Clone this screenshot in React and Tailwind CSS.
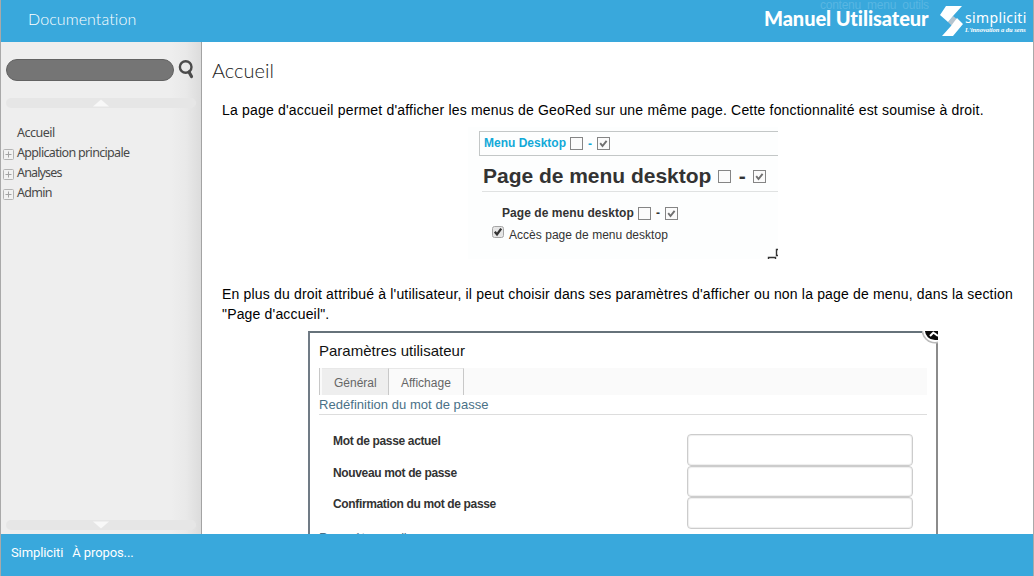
import React from "react";

const SANS = "font-['Liberation_Sans',Arial,sans-serif]";

function Box({ checked }) {
  return (
    <svg width="13" height="13" viewBox="0 0 13 13" className="block shrink-0">
      <rect x="0.5" y="0.5" width="12" height="12" fill="#fbfbfb" stroke="#858585" />
      {checked && <path d="M3.2 6.2 L5.5 9 L9.6 3.8" fill="none" stroke="#707070" strokeWidth="1.9" />}
    </svg>
  );
}

function Pair({ gap, dash }) {
  return (
    <>
      <Box />
      <span className={gap}>{dash}</span>
      <Box checked />
    </>
  );
}

function ScrollBar({ up }) {
  return (
    <div className="flex h-[10px] w-[190px] justify-center rounded-full bg-[#e6e6e6]">
      <svg width="16" height="10" viewBox="0 0 16 10">
        <path d={up ? "M0 8.5 L8 1.5 L16 8.5 Z" : "M0 1.5 L8 8.5 L16 1.5 Z"} fill="#f8f8f8" />
      </svg>
    </div>
  );
}

function MenuItem({ label, plus, track }) {
  return (
    <li className="flex h-5 items-center">
      <span className="w-[14px] shrink-0 pl-[2px] pt-[4px]">
        {plus && (
          <svg width="11" height="11" viewBox="0 0 11 11" className="block">
            <rect x="0.5" y="0.5" width="10" height="10" rx="1" fill="#f2f2f2" stroke="#b3b3b3" />
            <path d="M2.5 5.5H8.5M5.5 2.5V8.5" stroke="#a3a3a3" />
          </svg>
        )}
      </span>
      <span className={`pl-[2px] pt-[2px] text-[12.5px] leading-5 text-[#484848] ${track}`}>{label}</span>
    </li>
  );
}

function Header() {
  return (
    <header className="relative flex h-[42px] shrink-0 overflow-hidden bg-[#39a8dc] text-white">
      <h1 className="flex-1 pl-[27px] pt-[7px] font-['Lato',sans-serif] text-[16px] font-light leading-[24px] tracking-[0.09px]">Documentation</h1>
      <div className={`absolute left-[819px] top-[-3px] whitespace-nowrap text-[12px] leading-[17px] tracking-[-0.25px] text-[#58b6e2] ${SANS}`}>contenu&nbsp; menu&nbsp; outils</div>
      <div className="relative w-[165px] whitespace-nowrap pt-[6px] font-['Lato',sans-serif] text-[20px] font-black leading-[24px] tracking-[-0.08px]">Manuel Utilisateur</div>
      <div className="ml-[11px] flex w-[93px] pt-[6px]">
        <svg width="24" height="30" viewBox="0 0 24 30" className="shrink-0">
          <path d="M8 16L13 10L18 14L12 20Z" fill="#b4c4cf" />
          <path d="M6 0H22L13 10L8 16L0 9Z M17 12L23 18L13 30H2L11 20Z" fill="#fff" />
        </svg>
        <div className="pl-[1px] pt-[3px]">
          <div className="whitespace-nowrap font-['Noto_Sans',sans-serif] text-[14px] leading-[17px] tracking-[0.35px]">simpliciti</div>
          <div className="whitespace-nowrap font-['Liberation_Serif',serif] text-[6.5px] font-bold italic leading-[7px] tracking-[-0.02px]">L'innovation a du sens</div>
        </div>
      </div>
    </header>
  );
}

function Sidebar() {
  return (
    <aside className="flex w-[201px] shrink-0 flex-col border-r border-[#a3a3a3] bg-[linear-gradient(to_right,#eee_0,#eee_170px,#e9e9e9_185px,#dcdcdc_200px)] font-['Noto_Sans',sans-serif]">
      <div className="flex pl-[5px] pt-[17px]">
        <div className="h-[22px] w-[168px] rounded-[11px] border border-[#626262] bg-[#757575]" />
        <svg width="18" height="22" viewBox="0 0 18 22" className="ml-[4px]">
          <circle cx="7.7" cy="8" r="5.8" fill="none" stroke="#4b4b4b" strokeWidth="2.4" />
          <path d="M11 13L13.5 17.5" stroke="#4b4b4b" strokeWidth="3.2" strokeLinecap="round" />
        </svg>
      </div>
      <div className="pl-[5px] pt-[17px]"><ScrollBar up /></div>
      <ul className="flex-1 pt-[14px]">
        <MenuItem label="Accueil" track="tracking-[-0.5px]" />
        <MenuItem label="Application principale" plus track="tracking-[-0.67px]" />
        <MenuItem label="Analyses" plus track="tracking-[-0.85px]" />
        <MenuItem label="Admin" plus track="tracking-[-0.7px]" />
      </ul>
      <div className="pb-[4px] pl-[5px]"><ScrollBar /></div>
    </aside>
  );
}

function RightsPanel() {
  return (
    <div className="relative ml-[256px] h-[132px] w-[310px] shrink-0 overflow-hidden bg-[#fdfefe] pt-[4px] font-bold text-[#333]">
      <div className="ml-[11px] flex h-[25px] items-center border border-r-0 border-[#c3c7c7] pl-[4px] text-[12px] text-[#12a9d8]">
        <span className="mb-[2px] mr-[4px]">Menu Desktop</span>
        <Pair dash="-" gap="w-[14px] text-center" />
      </div>
      <div className="ml-[14px] flex h-[36px] items-center border-b border-[#e0e2e2] pt-[5px] text-[21px] leading-[30px]">
        <span className="ml-[1px] mr-[7px] tracking-[-0.02px]">Page de menu desktop</span>
        <Pair dash="-" gap="w-[22px] text-center" />
      </div>
      <div className="ml-[34px] mt-[12px] flex h-[18px] items-center text-[12px]">
        <span className="mr-[4px] tracking-[0.06px]">Page de menu desktop</span>
        <Pair dash="-" gap="w-[14px] text-center" />
      </div>
      <div className="ml-[24px] mt-[2px] flex h-[20px] items-center text-[12px] font-normal">
        <svg width="12" height="12" viewBox="0 0 12 12" className="mb-[4px] mr-[5px]">
          <rect x="0.5" y="0.5" width="11" height="11" rx="2" fill="#e6e6e6" stroke="#a5a5a5" />
          <path d="M2.8 5.8L5 8.4L9.2 2.6" fill="none" stroke="#333" strokeWidth="2.3" />
        </svg>
        <span className="pt-[2px] tracking-[0.03px]">Accès page de menu desktop</span>
      </div>
      <svg width="11" height="11" viewBox="0 0 11 11" className="absolute bottom-0 right-0">
        <path d="M1.5 11V9.5H8.5V11M11 1.5H9.5V7.5H11" fill="none" stroke="#333" strokeWidth="1.4" />
      </svg>
    </div>
  );
}

function Field({ label }) {
  return (
    <div className="flex h-[31.7px]">
      <span className="w-[354px] text-[12px] font-bold leading-[14px] tracking-[-0.35px] text-[#333]">{label}</span>
      <span className="block h-[31.7px] w-[226px] rounded-[4px] border border-[#ccc] bg-white shadow-[inset_0_0_1px_1px_#eee]" />
    </div>
  );
}

function SettingsPanel() {
  return (
    <div className="relative ml-[96px] mt-[7px] h-[260px] w-[630px] shrink-0 border-l-2 border-r-2 border-t-2 border-l-[#707b85] border-r-[#8b8b8b] border-t-[#66727a] bg-white pl-[9px] pr-[9px]">
      <div className="pt-[8px] text-[15px] leading-[20px] text-[#111]">Paramètres utilisateur</div>
      <div className="mt-[7px] flex h-[27px] border-l border-[#c8c8c8] bg-[#fafafa] text-[12px] text-[#666]">
        <span className="ml-[2px] w-[67px] border-r border-[#c8c8c8] border-t border-t-[#e8e8e8] bg-[#eee] pl-[12px] leading-[28px]">Général</span>
        <span className="w-[75px] border-r border-[#c8c8c8] border-t border-t-[#e8e8e8] pl-[12px] leading-[28px]">Affichage</span>
      </div>
      <div className="h-[20px] border-b border-[#ddd] text-[13px] leading-[19px] tracking-[0.04px] text-[#4a7187]">Redéfinition du mot de passe</div>
      <div className="pl-[14px] pt-[19px]">
        <Field label="Mot de passe actuel" />
        <Field label="Nouveau mot de passe" />
        <Field label="Confirmation du mot de passe" />
      </div>
      <div className="mt-[1px] text-[13px] leading-[15px] tracking-[-0.5px] text-[#4a7187]">Paramètres mail</div>
      <svg width="16" height="16" viewBox="0 0 16 16" className="absolute right-[-2px] top-[-2px]">
        <circle cx="13" cy="-1" r="13.5" fill="#bbb" />
        <circle cx="13" cy="-1" r="11" fill="#0a0a0a" stroke="#fff" strokeWidth="1.8" />
        <path d="M8 5L12 1M12 2L16 5" stroke="#fff" strokeWidth="2" />
      </svg>
    </div>
  );
}

export default function App() {
  return (
    <div className={`flex h-[576px] w-[1034px] flex-col overflow-hidden border-x border-[#a9a9a9] bg-white ${SANS}`}>
      <Header />
      <div className="flex h-[492px] shrink-0 overflow-hidden">
        <Sidebar />
        <main className="flex h-[492px] flex-1 flex-col overflow-hidden pl-[10px]">
          <h2 className="h-[58px] shrink-0 pt-[15px] font-['Lato',sans-serif] text-[20px] font-light leading-[26px] text-[#222]">Accueil</h2>
          <p className="h-[27px] shrink-0 whitespace-nowrap pl-[10px] text-[14px] leading-[20px] tracking-[0.183px] text-black">La page d'accueil permet d'afficher les menus de GeoRed sur une même page. Cette fonctionnalité est soumise à droit.</p>
          <RightsPanel />
          <p className="mt-[25px] h-[40px] shrink-0 whitespace-nowrap pl-[10px] text-[14px] leading-[20px] tracking-[0.173px] text-black">
            En plus du droit attribué à l'utilisateur, il peut choisir dans ses paramètres d'afficher ou non la page de menu, dans la section<br />"Page d'accueil".
          </p>
          <SettingsPanel />
        </main>
      </div>
      <footer className="flex h-[42px] shrink-0 gap-[9px] bg-[#39a8dc] pl-[10px] pt-[9px] font-['Roboto',sans-serif] text-[13px] leading-[20px] tracking-[-0.1px] text-white">
        <span>Simpliciti</span>
        <span>À propos...</span>
      </footer>
    </div>
  );
}
